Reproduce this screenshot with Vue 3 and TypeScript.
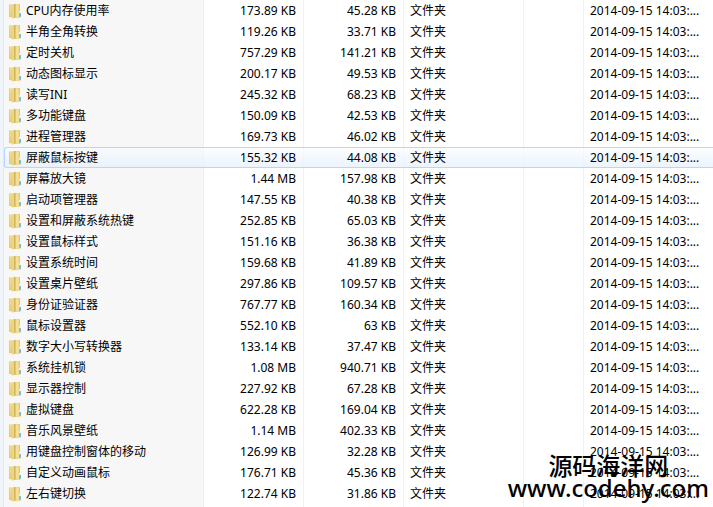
<script setup lang="ts">
interface Entry {
  name: string
  size: string
  packed: string
  hovered?: boolean
}

const kind = '文件夹'
const modified = '2014-09-15 14:03:...'

const entries: Entry[] = [
  { name: 'CPU内存使用率', size: '173.89 KB', packed: '45.28 KB' },
  { name: '半角全角转换', size: '119.26 KB', packed: '33.71 KB' },
  { name: '定时关机', size: '757.29 KB', packed: '141.21 KB' },
  { name: '动态图标显示', size: '200.17 KB', packed: '49.53 KB' },
  { name: '读写INI', size: '245.32 KB', packed: '68.23 KB' },
  { name: '多功能键盘', size: '150.09 KB', packed: '42.53 KB' },
  { name: '进程管理器', size: '169.73 KB', packed: '46.02 KB' },
  { name: '屏蔽鼠标按键', size: '155.32 KB', packed: '44.08 KB', hovered: true },
  { name: '屏幕放大镜', size: '1.44 MB', packed: '157.98 KB' },
  { name: '启动项管理器', size: '147.55 KB', packed: '40.38 KB' },
  { name: '设置和屏蔽系统热键', size: '252.85 KB', packed: '65.03 KB' },
  { name: '设置鼠标样式', size: '151.16 KB', packed: '36.38 KB' },
  { name: '设置系统时间', size: '159.68 KB', packed: '41.89 KB' },
  { name: '设置桌片壁纸', size: '297.86 KB', packed: '109.57 KB' },
  { name: '身份证验证器', size: '767.77 KB', packed: '160.34 KB' },
  { name: '鼠标设置器', size: '552.10 KB', packed: '63 KB' },
  { name: '数字大小写转换器', size: '133.14 KB', packed: '37.47 KB' },
  { name: '系统挂机锁', size: '1.08 MB', packed: '940.71 KB' },
  { name: '显示器控制', size: '227.92 KB', packed: '67.28 KB' },
  { name: '虚拟键盘', size: '622.28 KB', packed: '169.04 KB' },
  { name: '音乐风景壁纸', size: '1.14 MB', packed: '402.33 KB' },
  { name: '用键盘控制窗体的移动', size: '126.99 KB', packed: '32.28 KB' },
  { name: '自定义动画鼠标', size: '176.71 KB', packed: '45.36 KB' },
  { name: '左右键切换', size: '122.74 KB', packed: '31.86 KB' },
]
</script>

<template>
  <main class="pane">
    <svg class="defs" width="0" height="0" aria-hidden="true">
      <defs>
        <linearGradient id="folder-back" x1="0" x2="1" y1="0" y2="0">
          <stop offset="0" stop-color="#e3c873" />
          <stop offset="1" stop-color="#edd98d" />
        </linearGradient>
        <linearGradient id="folder-front" x1="0" x2="1" y1="0" y2="1">
          <stop offset="0" stop-color="#f8e9ac" />
          <stop offset="1" stop-color="#e2c665" />
        </linearGradient>
        <symbol id="folder" viewBox="0 0 14 16">
          <path d="M5 1h6.5v7l1 .6V15H5z" fill="url(#folder-back)" />
          <path d="M11 1h.8v7H11z" fill="#d9c072" />
          <path d="M8 1.6h2.6v12.8H8z" fill="#f2e09a" />
          <path d="M11.4 8h1.2v2h-1.2z" fill="#f5fbff" />
          <path d="M11.4 10.2h1.4v3.6h-1.4z" fill="#4ea9e0" />
          <path d="M1 1.6L4 1v13.6L1 14z" fill="url(#folder-front)" />
          <path d="M1 1.6h.7V14L1 13.9z" fill="#ddc67b" />
          <path d="M4 2l3-1.2v13.4L4.4 16 4 14.6z" fill="#ecd685" />
          <path d="M6.3 1.2L7.2.8v13.4l-.9.7z" fill="#c9aa4c" />
        </symbol>
      </defs>
    </svg>
    <table class="files">
      <colgroup>
        <col class="c-name" />
        <col class="c-size" />
        <col class="c-size" />
        <col class="c-kind" />
        <col class="c-gap" />
        <col />
      </colgroup>
      <tbody>
        <tr v-for="entry in entries" :key="entry.name" :class="{ hovered: entry.hovered }">
          <td class="name">
            <div class="label">
              <svg class="icon" aria-hidden="true"><use href="#folder" /></svg>
              <span>{{ entry.name }}</span>
            </div>
          </td>
          <td class="num">{{ entry.size }}</td>
          <td class="num">{{ entry.packed }}</td>
          <td>{{ kind }}</td>
          <td></td>
          <td class="date">{{ modified }}</td>
        </tr>
      </tbody>
    </table>
    <div class="watermark">
      <div class="site">源码海洋网</div>
      <div class="url">www.codehy.com</div>
    </div>
  </main>
</template>

<style>
body {
  background: #fff;
}
</style>

<style scoped>
.pane {
  position: relative;
  min-height: 100vh;
  box-sizing: border-box;
  padding-left: 4px;
  overflow: hidden;
  background: linear-gradient(90deg, #f0f5fc 3px, #dfe9f5 3px 4px, #f7f7f7 4px 203px, #e8eff7 203px 204px, #fff 204px 303px, #edf3f9 303px 304px, #fff 304px 403px, #edf3f9 403px 404px, #fff 404px 523px, #edf3f9 523px 524px, #fff 524px 583px, #edf3f9 583px 584px, #fff 584px);
  color: #000;
  font: 12px/20px "Noto Sans", "Noto Sans CJK SC", sans-serif;
}
.defs {
  position: absolute;
}
.files {
  width: 100%;
  table-layout: fixed;
  border-collapse: separate;
  border-spacing: 0;
}
.c-name {
  width: 200px;
}
.c-size {
  width: 100px;
}
.c-kind {
  width: 120px;
}
.c-gap {
  width: 60px;
}
td {
  height: 21px;
  box-sizing: border-box;
  padding: 0 6px;
  line-height: 20px;
  white-space: nowrap;
  vertical-align: middle;
}
.name {
  padding: 0 0 0 4px;
}
.label {
  display: flex;
  align-items: center;
  gap: 4px;
}
.icon {
  width: 14px;
  height: 16px;
}
.num {
  padding: 0 8px;
  text-align: right;
}
.hovered td {
  border-top: 1px solid #b8d6fb;
  border-bottom: 1px solid #b8d6fb;
  background: linear-gradient(#fafcff99, #e6f1fdcc);
  line-height: 18px;
}
.hovered td:first-child {
  border-left: 1px solid #b8d6fb;
  border-radius: 3px 0 0 3px;
  padding-left: 3px;
}
.watermark {
  position: absolute;
  right: 4px;
  bottom: 8px;
  text-align: center;
  font-family: "Noto Sans", "Noto Sans CJK SC", sans-serif;
  font-weight: 500;
}
.site {
  font-size: 24px;
  line-height: 22px;
}
.url {
  font-size: 24px;
  line-height: 22px;
}
</style>
